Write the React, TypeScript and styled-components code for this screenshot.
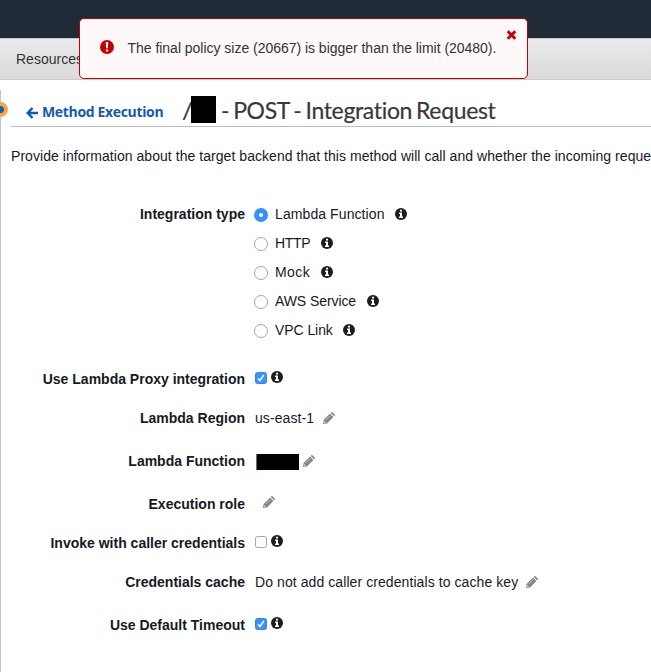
import React from "react";
import styled, { createGlobalStyle } from "styled-components";

const GlobalStyle = createGlobalStyle`
  * { box-sizing: border-box; }
  body {
    margin: 0;
    background: #fff;
    color: #16191f;
    font: 14px/20px "Liberation Sans", Arial, sans-serif;
    overflow: hidden;
  }
`;

const Page = styled.div`
  width: 651px;
  height: 672px;
  overflow: hidden;
  position: relative;
`;

const TopBar = styled.header`
  height: 38px;
  background: #202a36;
`;

const NavBar = styled.nav`
  height: 42px;
  padding: 11px 0 0 16px;
  border-top: 1px solid #c9c9c9;
  border-bottom: 1px solid #cbcbcb;
  background: linear-gradient(#eaeaea, #dadada);
  color: #333;
`;

const NavItem = styled.span`
  display: block;
  line-height: 18px;
`;

const Alert = styled.div`
  position: absolute;
  left: 79px;
  top: 18px;
  width: 449px;
  height: 61px;
  display: flex;
  align-items: flex-start;
  padding: 19px 0 0 20px;
  border: 1px solid #c40000;
  border-radius: 5px;
  background: #fef8f8;
  color: #333;
  > svg { margin-top: 2px; }
`;

const AlertText = styled.span`
  margin-left: 13.5px;
  letter-spacing: -0.025px;
  white-space: nowrap;
`;

const CloseButton = styled.button`
  position: absolute;
  top: 11px;
  right: 10px;
  width: 11px;
  height: 10px;
  padding: 0;
  border: 0;
  background: none;
  display: flex;
`;

const Main = styled.main`
  margin-top: 10px;
  height: 582px;
  border-left: 1px solid #c6c6c6;
  padding-left: 10px;
`;

const ResourceDot = styled.span`
  position: absolute;
  left: -7px;
  top: 102px;
  width: 15px;
  height: 15px;
  border: 4px solid #fba63c;
  border-radius: 50%;
  background: #1463b6;
`;

const TitleRow = styled.div`
  display: flex;
  height: 37px;
  border-bottom: 1px solid #bdbdbd;
  padding-left: 15px;
  white-space: nowrap;
`;

const BackLink = styled.a`
  display: flex;
  width: 156px;
  padding-top: 12px;
  color: #1259b5;
  font: bold 14px/20px "Open Sans", sans-serif;
  letter-spacing: -0.34px;
  svg { margin: 5px 4px 0 0; }
`;

const Title = styled.h1`
  display: flex;
  margin: 0;
  color: #383838;
  font: 400 23px/40px Lato, sans-serif;
  font-variant-ligatures: none;
  letter-spacing: -0.34px;
  word-spacing: -1.6px;
  -webkit-text-stroke: 0.2px #383838;
`;

const Redaction = styled.span<{ $w: number; $h: number }>`
  display: block;
  width: ${(p) => p.$w}px;
  height: ${(p) => p.$h}px;
  background: #000;
`;

const TitleRedaction = styled(Redaction)`
  margin: 6px 5px 0 0;
`;

const Slash = styled.span`
  width: 9px;
  font-size: 24px;
`;

const Description = styled.p`
  margin: 19px 0 0;
  height: 20px;
  letter-spacing: 0.05px;
  white-space: nowrap;
`;

const Form = styled.form`
  margin: 38px 0 0;
`;

const Row = styled.div<{ $gap?: number }>`
  display: grid;
  grid-template-columns: 234px 1fr;
  column-gap: 10px;
  margin-top: ${(p) => p.$gap ?? 0}px;
  min-height: 20px;
`;

const Label = styled.span`
  text-align: right;
  font-weight: bold;
  white-space: nowrap;
`;

const Value = styled.div`
  display: flex;
  align-items: flex-start;
  letter-spacing: 0.08px;
  white-space: nowrap;
`;

const Options = styled.div`
  display: grid;
  grid-auto-rows: 29px;
`;

const Option = styled.label<{ $tracking: number }>`
  display: flex;
  align-items: flex-start;
  letter-spacing: ${(p) => p.$tracking}px;
  svg { margin: 4px 0 0 10.5px; }
`;

const Radio = styled.span<{ $on?: boolean }>`
  width: 14px;
  height: 14px;
  margin: 4px 7px 0 -1px;
  border: ${(p) => (p.$on ? "5px solid #3490fb" : "1px solid #a5a5a5")};
  border-radius: 50%;
  background: #fff;
`;

const CheckBox = styled.span<{ $on?: boolean }>`
  display: flex;
  width: 12px;
  height: 12px;
  margin: 3px 4px 0 0;
  border: 1px solid ${(p) => (p.$on ? "#2f86f3" : "#a5a5a5")};
  border-radius: 2.5px;
  background: ${(p) => (p.$on ? "#3891fc" : "#fff")};
`;

const Icon = styled.svg`
  display: block;
  flex: none;
`;

const CheckInfo = styled.span`
  padding-top: 2px;
`;

const Edit = styled.span<{ $left: number; $top?: number }>`
  margin: ${(p) => p.$top ?? 4}px 0 0 ${(p) => p.$left}px;
`;

const FunctionRedaction = styled(Redaction)`
  margin: 3px 0 0 1px;
  border-left: 1px solid #8a5a5e;
`;

const Info = () => (
  <Icon width="12" height="12" viewBox="0 0 12 12">
    <circle cx="6" cy="6" r="6" fill="#1d1d1d" />
    <path d="M5 1.800h2v1.600H5zM4.100 4.600H7v3.900h1V10H4V8.500h1V6h-.9z" fill="#fff" />
  </Icon>
);

const Pencil = () => (
  <Icon width="12" height="12" viewBox="0 0 12 12">
    <path d="M0 12 .6 8 7 1.600 10.400 5 4 11.400zM7.700.9l.6-.6q.6-.6 1.200 0l2.200 2.200q.6.600 0 1.200l-.6.600z" fill="#868686" />
    <path d="m3 7.800 4.300-4.300" stroke="#d0d0d0" strokeWidth=".8" />
    <path d="m1.300 9.300 1.400 1.400-1 .3-.7-.7z" fill="#fff" />
  </Icon>
);

const Check = ({ on }: { on?: boolean }) => (
  <CheckBox $on={on}>
    {on && (
      <svg width="10" height="10" viewBox="0 0 10 10">
        <path d="m2 5.300 2 2.200L7.800 2" fill="none" stroke="#fff" strokeWidth="1.500" />
      </svg>
    )}
  </CheckBox>
);

const CheckValue = ({ on }: { on?: boolean }) => (
  <Value>
    <Check on={on} />
    <CheckInfo><Info /></CheckInfo>
  </Value>
);

const types = [
  { name: "Lambda Function", tracking: 0.09 },
  { name: "HTTP", tracking: -0.35 },
  { name: "Mock", tracking: 0.4 },
  { name: "AWS Service", tracking: -0.08 },
  { name: "VPC Link", tracking: -0.07 },
];

export default function App() {
  return (
    <Page>
      <GlobalStyle />
      <TopBar />
      <NavBar><NavItem>Resources</NavItem></NavBar>
      <Main>
        <TitleRow>
          <BackLink>
            <svg width="12" height="12" viewBox="0 0 12 12">
              <path d="M6.500 1 1.700 6l4.800 5M2 6h10" fill="none" stroke="#1259b5" strokeWidth="2.500" />
            </svg>
            Method Execution
          </BackLink>
          <Title>
            <Slash>/</Slash>
            <TitleRedaction $w={25} $h={27} />
            - POST - Integration Request
          </Title>
        </TitleRow>
        <Description>
          Provide information about the target backend that this method will call and whether the incoming reque
        </Description>
        <Form>
          <Row>
            <Label>Integration type</Label>
            <Options>
              {types.map(({ name, tracking }, i) => (
                <Option key={name} $tracking={tracking}>
                  <Radio $on={i === 0} />
                  {name}
                  <Info />
                </Option>
              ))}
            </Options>
          </Row>
          <Row $gap={20}><Label>Use Lambda Proxy integration</Label><CheckValue on /></Row>
          <Row $gap={19}>
            <Label>Lambda Region</Label>
            <Value>us-east-1<Edit $left={8.5}><Pencil /></Edit></Value>
          </Row>
          <Row $gap={23}>
            <Label>Lambda Function</Label>
            <Value><FunctionRedaction $w={43} $h={16} /><Edit $left={4}><Pencil /></Edit></Value>
          </Row>
          <Row $gap={23}>
            <Label>Execution role</Label>
            <Value><Edit $left={8} $top={2}><Pencil /></Edit></Value>
          </Row>
          <Row $gap={19}><Label>Invoke with caller credentials</Label><CheckValue /></Row>
          <Row $gap={19}>
            <Label>Credentials cache</Label>
            <Value>Do not add caller credentials to cache key<Edit $left={7.5}><Pencil /></Edit></Value>
          </Row>
          <Row $gap={23}><Label>Use Default Timeout</Label><CheckValue on /></Row>
        </Form>
      </Main>
      <ResourceDot />
      <Alert>
        <svg width="14" height="14" viewBox="0 0 14 14">
          <circle cx="7" cy="7" r="7" fill="#c80000" />
          <path d="M5.800 2h2.400L7.900 8.300H6.100zM5.900 9.500h2.200v2H5.900z" fill="#fff" />
        </svg>
        <AlertText>The final policy size (20667) is bigger than the limit (20480).</AlertText>
        <CloseButton aria-label="Close">
          <svg width="11" height="10" viewBox="0 0 11 10">
            <path d="m1.700 1.200 7.600 7.600m0-7.600L1.700 8.800" stroke="#c80000" strokeWidth="3" />
          </svg>
        </CloseButton>
      </Alert>
    </Page>
  );
}
